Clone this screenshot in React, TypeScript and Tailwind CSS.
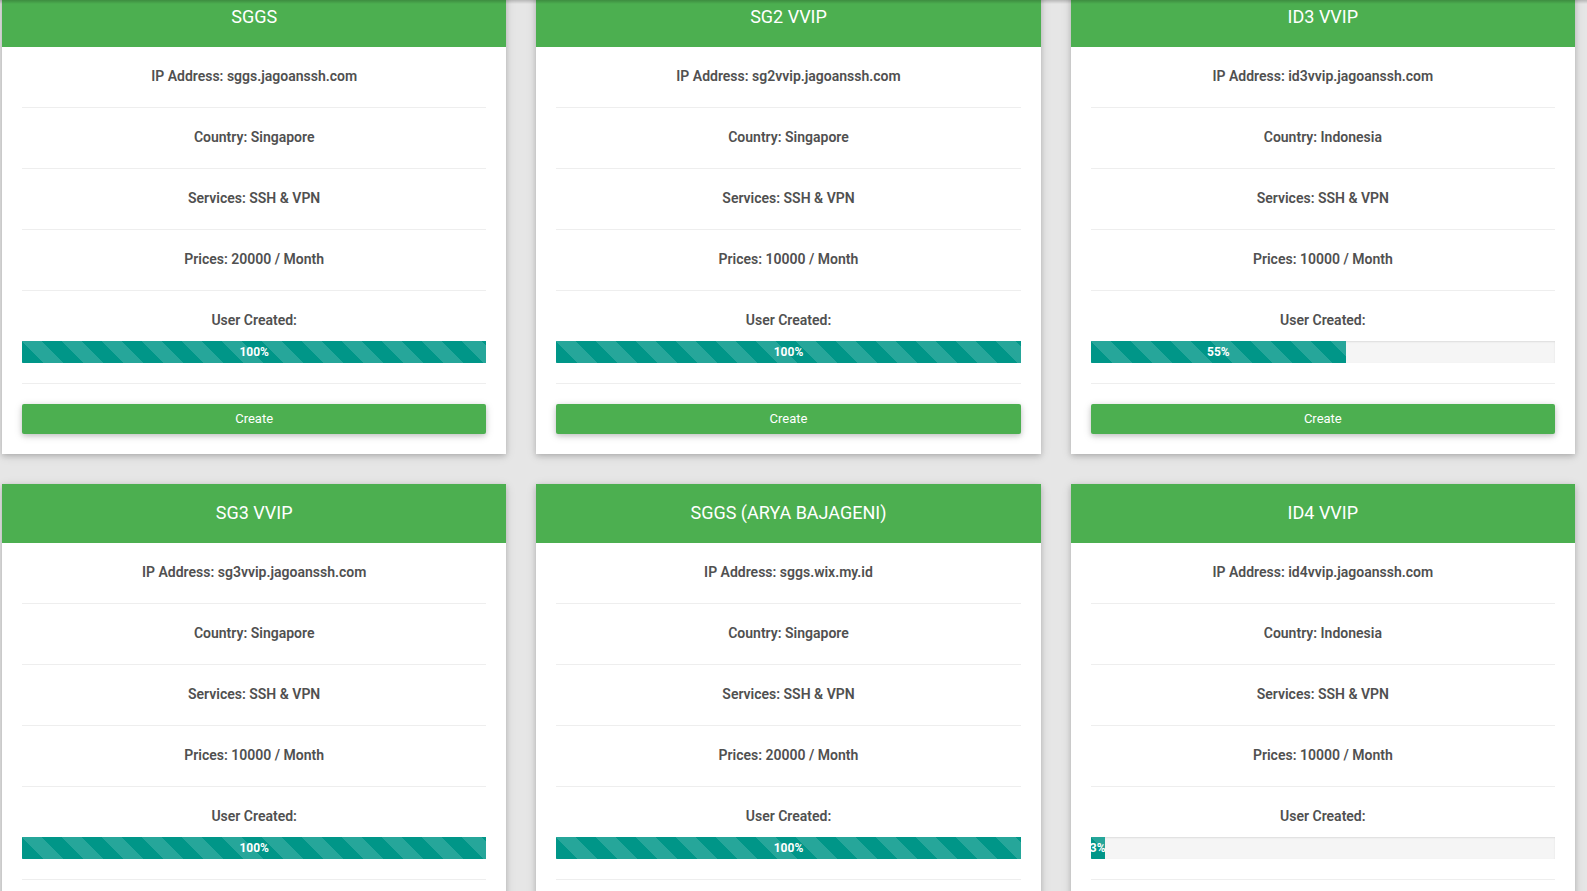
type Server = {
  name: string
  host: string
  country: string
  price: number
  used: number
}

const servers: Server[] = [
  { name: 'SGGS', host: 'sggs.jagoanssh.com', country: 'Singapore', price: 20000, used: 100 },
  { name: 'SG2 VVIP', host: 'sg2vvip.jagoanssh.com', country: 'Singapore', price: 10000, used: 100 },
  { name: 'ID3 VVIP', host: 'id3vvip.jagoanssh.com', country: 'Indonesia', price: 10000, used: 55 },
  { name: 'SG3 VVIP', host: 'sg3vvip.jagoanssh.com', country: 'Singapore', price: 10000, used: 100 },
  { name: 'SGGS (ARYA BAJAGENI)', host: 'sggs.wix.my.id', country: 'Singapore', price: 20000, used: 100 },
  { name: 'ID4 VVIP', host: 'id4vvip.jagoanssh.com', country: 'Indonesia', price: 10000, used: 3 },
]

const row = 'pt-[19px] pb-[21px] text-center text-sm leading-5 font-semibold text-[#505050] border-b border-[#eee]'

function ServerCard({ server }: { server: Server }) {
  return (
    <div className="bg-white shadow-[0_2px_5px_0_rgba(0,0,0,0.16),0_2px_10px_0_rgba(0,0,0,0.12)]">
      <div className="h-[59px] bg-[#4caf50] flex items-center justify-center pb-[3px] text-white text-[18px]">
        {server.name}
      </div>
      <div className="px-5">
        <div className={row}>IP Address: {server.host}</div>
        <div className={row}>Country: {server.country}</div>
        <div className={row}>Services: SSH &amp; VPN</div>
        <div className={row}>Prices: {server.price} / Month</div>
        <div className="pt-[19px] pb-5 text-center text-sm leading-5 font-semibold text-[#505050] border-b border-[#eee]">
          User Created:
          <div className="mt-[11px] h-[22px] bg-[#f5f5f5] shadow-[inset_0_1px_2px_rgba(0,0,0,0.1)] overflow-visible">
            <div
              className="h-full bg-[#009688] bg-[linear-gradient(45deg,rgba(255,255,255,.15)_25%,transparent_25%,transparent_50%,rgba(255,255,255,.15)_50%,rgba(255,255,255,.15)_75%,transparent_75%,transparent)] bg-[length:40px_40px] text-white text-xs font-bold leading-[22px] text-center whitespace-nowrap flex justify-center"
              style={{ width: `${server.used}%` }}
            >
              {server.used}%
            </div>
          </div>
        </div>
        <div className="py-5">
          <button className="w-full h-[30px] rounded-[2px] bg-[#4caf50] text-white text-[13px] shadow-[0_2px_5px_0_rgba(0,0,0,0.16),0_2px_10px_0_rgba(0,0,0,0.12)]">
            Create
          </button>
        </div>
      </div>
    </div>
  )
}

export default function App() {
  return (
    <div className="relative min-h-screen bg-[#e6e6e6] overflow-hidden font-['Roboto',sans-serif]">
      <div className="-mt-[12px] pl-[2px] w-[1575px] grid grid-cols-3 gap-[30px]">
        {servers.map((s) => (
          <ServerCard key={s.name} server={s} />
        ))}
      </div>
      <div className="absolute top-0 left-0 right-0 h-[4px] bg-gradient-to-b from-black/20 to-transparent" />
    </div>
  )
}
